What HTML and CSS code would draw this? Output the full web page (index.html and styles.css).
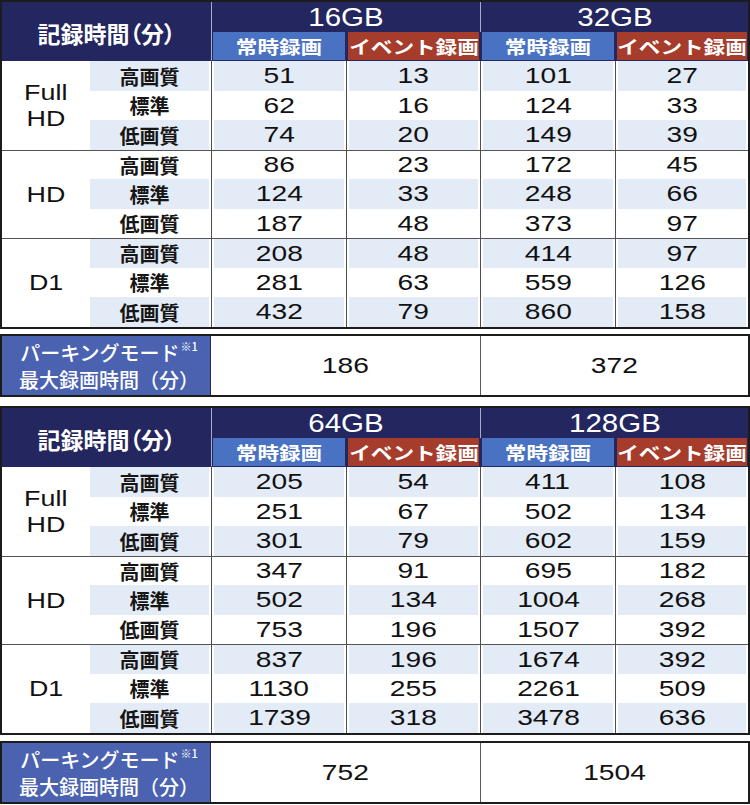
FILE: index.html
```html
<!DOCTYPE html>
<html lang="ja">
<head>
<meta charset="utf-8">
<title>記録時間</title>
<link rel="stylesheet" href="styles.css">
</head>
<body>
<div class="sheet">

  <div class="tbl">
    <div class="title">記録時間（分）</div>
    <div class="gb gb1"><span>16GB</span></div>
    <div class="gb gb2"><span>32GB</span></div>
    <div class="sub blue s1"><span>常時録画</span></div>
    <div class="sub red s2"><span>イベント録画</span></div>
    <div class="sub blue s3"><span>常時録画</span></div>
    <div class="sub red s4"><span>イベント録画</span></div>

    <div class="res"><span>Full</span><span>HD</span></div>
    <div class="q b">高画質</div><div class="n b"><span>51</span></div><div class="n b"><span>13</span></div><div class="n b"><span>101</span></div><div class="n b"><span>27</span></div>
    <div class="q">標準</div><div class="n"><span>62</span></div><div class="n"><span>16</span></div><div class="n"><span>124</span></div><div class="n"><span>33</span></div>
    <div class="q b">低画質</div><div class="n b"><span>74</span></div><div class="n b"><span>20</span></div><div class="n b"><span>149</span></div><div class="n b"><span>39</span></div>

    <div class="res g"><span>HD</span></div>
    <div class="q g">高画質</div><div class="n g"><span>86</span></div><div class="n g"><span>23</span></div><div class="n g"><span>172</span></div><div class="n g"><span>45</span></div>
    <div class="q b">標準</div><div class="n b"><span>124</span></div><div class="n b"><span>33</span></div><div class="n b"><span>248</span></div><div class="n b"><span>66</span></div>
    <div class="q">低画質</div><div class="n"><span>187</span></div><div class="n"><span>48</span></div><div class="n"><span>373</span></div><div class="n"><span>97</span></div>

    <div class="res g"><span>D1</span></div>
    <div class="q b g">高画質</div><div class="n b g"><span>208</span></div><div class="n b g"><span>48</span></div><div class="n b g"><span>414</span></div><div class="n b g"><span>97</span></div>
    <div class="q">標準</div><div class="n"><span>281</span></div><div class="n"><span>63</span></div><div class="n"><span>559</span></div><div class="n"><span>126</span></div>
    <div class="q b">低画質</div><div class="n b"><span>432</span></div><div class="n b"><span>79</span></div><div class="n b"><span>860</span></div><div class="n b"><span>158</span></div>
  </div>

  <div class="park">
    <div class="plabel">
      <div>パーキングモード<sup>※1</sup></div>
      <div>最大録画時間（分）</div>
    </div>
    <div class="pval"><span>186</span></div>
    <div class="pval"><span>372</span></div>
  </div>

  <div class="tbl second">
    <div class="title">記録時間（分）</div>
    <div class="gb gb1"><span>64GB</span></div>
    <div class="gb gb2"><span>128GB</span></div>
    <div class="sub blue s1"><span>常時録画</span></div>
    <div class="sub red s2"><span>イベント録画</span></div>
    <div class="sub blue s3"><span>常時録画</span></div>
    <div class="sub red s4"><span>イベント録画</span></div>

    <div class="res"><span>Full</span><span>HD</span></div>
    <div class="q b">高画質</div><div class="n b"><span>205</span></div><div class="n b"><span>54</span></div><div class="n b"><span>411</span></div><div class="n b"><span>108</span></div>
    <div class="q">標準</div><div class="n"><span>251</span></div><div class="n"><span>67</span></div><div class="n"><span>502</span></div><div class="n"><span>134</span></div>
    <div class="q b">低画質</div><div class="n b"><span>301</span></div><div class="n b"><span>79</span></div><div class="n b"><span>602</span></div><div class="n b"><span>159</span></div>

    <div class="res g"><span>HD</span></div>
    <div class="q g">高画質</div><div class="n g"><span>347</span></div><div class="n g"><span>91</span></div><div class="n g"><span>695</span></div><div class="n g"><span>182</span></div>
    <div class="q b">標準</div><div class="n b"><span>502</span></div><div class="n b"><span>134</span></div><div class="n b"><span>1004</span></div><div class="n b"><span>268</span></div>
    <div class="q">低画質</div><div class="n"><span>753</span></div><div class="n"><span>196</span></div><div class="n"><span>1507</span></div><div class="n"><span>392</span></div>

    <div class="res g"><span>D1</span></div>
    <div class="q b g">高画質</div><div class="n b g"><span>837</span></div><div class="n b g"><span>196</span></div><div class="n b g"><span>1674</span></div><div class="n b g"><span>392</span></div>
    <div class="q">標準</div><div class="n"><span>1130</span></div><div class="n"><span>255</span></div><div class="n"><span>2261</span></div><div class="n"><span>509</span></div>
    <div class="q b">低画質</div><div class="n b"><span>1739</span></div><div class="n b"><span>318</span></div><div class="n b"><span>3478</span></div><div class="n b"><span>636</span></div>
  </div>

  <div class="park second-park">
    <div class="plabel">
      <div>パーキングモード<sup>※1</sup></div>
      <div>最大録画時間（分）</div>
    </div>
    <div class="pval"><span>752</span></div>
    <div class="pval"><span>1504</span></div>
  </div>

</div>
</body>
</html>
```

FILE: styles.css
```css
* {
  box-sizing: border-box;
  margin: 0;
  padding: 0;
}

body {
  margin: 0;
  background: #ffffff;
  font-family: "Liberation Sans", Arial, "Noto Sans CJK JP", sans-serif;
  color: #111111;
}

.sheet {
  width: 750px;
  display: flex;
  flex-direction: column;
}

.tbl {
  display: grid;
  grid-template-columns: 88px 121px 135px 134px 135px 133px;
  grid-template-rows: 30px 29px 30px 29px 30px 29px 30px 29px 30px 29px 30px;
  border: 2px solid #1c1c1c;
}

.tbl.second {
  margin-top: 9px;
}

.title {
  grid-column: 1 / 3;
  grid-row: 1 / 3;
  background: #23265f;
  color: #ffffff;
  font-family: "Noto Sans CJK JP", sans-serif;
  font-weight: 700;
  font-size: 23px;
  font-feature-settings: "palt";
  display: flex;
  align-items: center;
  justify-content: center;
  padding-top: 2px;
}

.gb {
  grid-row: 1;
  background: #23265f;
  color: #ffffff;
  font-size: 25px;
  display: flex;
  align-items: center;
  justify-content: center;
  border-left: 1px solid #a9abc4;
  padding-top: 1px;
}

.gb span {
  display: inline-block;
  transform: scaleX(1.18);
}

.gb1 { grid-column: 3 / 5; }
.gb2 { grid-column: 5 / 7; }

.sub {
  grid-row: 2;
  color: #ffffff;
  font-family: "Noto Sans CJK JP", sans-serif;
  font-weight: 700;
  font-size: 18px;
  display: flex;
  align-items: center;
  justify-content: center;
  border-left: 2px solid #23265f;
  border-right: 1px solid #23265f;
  border-bottom: 1px solid #23265f;
  line-height: 1;
}

.sub span {
  display: inline-block;
  transform: scaleX(1.2);
}

.s1 { grid-column: 3; border-left-color: #a9abc4; border-left-width: 1px; padding-left: 1px; background-clip: content-box; }
.s2 { grid-column: 4; }
.s3 { grid-column: 5; border-left-color: #23265f; border-left-width: 1px; padding-left: 1px; background-clip: content-box; }
.s4 { grid-column: 6; }

.s1, .s3 { background-color: #4a72c2; }
.s2, .s4 { background-color: #a53c2c; }

.s1, .s3 { box-shadow: inset 1px 0 0 #23265f; }

.res {
  grid-column: 1;
  grid-row: span 3;
  font-size: 22px;
  line-height: 26px;
  text-align: center;
  display: flex;
  flex-direction: column;
  align-items: center;
  justify-content: center;
  color: #111111;
}

.res span {
  display: block;
  transform: scaleX(1.22);
}

.q {
  grid-column: 2;
  font-family: "Noto Sans CJK JP", sans-serif;
  font-weight: 700;
  font-size: 20px;
  display: flex;
  align-items: center;
  justify-content: center;
  padding-right: 2px;
  background-clip: content-box;
  color: #161616;
}

.n {
  font-size: 22px;
  display: flex;
  align-items: center;
  justify-content: center;
  border-left: 1px solid #4e4e4e;
  padding: 0 2px;
  background-clip: content-box;
  color: #111111;
}

.n span,
.pval span {
  display: inline-block;
  transform: scaleX(1.28);
}

.b {
  background-color: #e3ebf7;
}

.g {
  border-top: 1px solid #555555;
}

.park {
  margin-top: 5px;
  height: 63px;
  display: grid;
  grid-template-columns: 209px 269px 268px;
  border: 2px solid #1c1c1c;
}

.park.second-park {
  margin-top: 6px;
}

.plabel {
  background: #4a62af;
  color: #ffffff;
  font-family: "Noto Sans CJK JP", sans-serif;
  font-weight: 500;
  font-size: 20px;
  line-height: 27px;
  display: flex;
  flex-direction: column;
  align-items: center;
  justify-content: center;
  border-right: 1px solid #2a2a3a;
  padding-left: 6px;
}

.plabel sup {
  font-size: 11px;
  vertical-align: top;
  line-height: 1;
  position: relative;
  top: 2px;
  margin-left: 1px;
}

.pval {
  font-size: 22px;
  display: flex;
  align-items: center;
  justify-content: center;
  border-left: 1px solid #5a5a5a;
  color: #111111;
}

.plabel + .pval {
  border-left: none;
}
```
